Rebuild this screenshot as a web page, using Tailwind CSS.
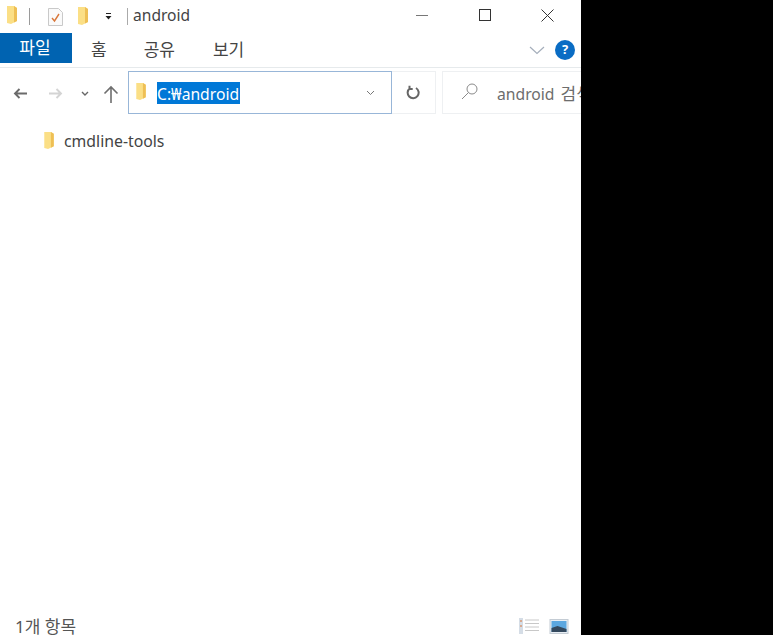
<!DOCTYPE html>
<html lang="ko">
<head>
<meta charset="UTF-8">
<title>android</title>
<script src="https://cdn.jsdelivr.net/npm/@tailwindcss/browser@4"></script>
</head>
<body class="bg-black">
<div class="flex w-[773px] h-[635px] overflow-hidden bg-black font-['Noto_Sans','Noto_Sans_CJK_KR',sans-serif]">
	<div class="w-[581px] h-full bg-white flex flex-col overflow-hidden">

		<!-- title bar -->
		<div class="h-[33px] flex items-center shrink-0 relative">
			<svg class="ml-[6px] w-[13px] h-[20px] -mt-[3px]" viewBox="0 0 13 20"><path d="M1 1h7l3 2v13l-6 3-4-1z" fill="#fbdf86"/><path d="M8 1l3 2v13l-3 1.500z" fill="#eebf55"/></svg>
			<div class="ml-[10px] w-px h-[17px] bg-[#9a9a9a] -mt-[1px]"></div>
			<svg class="ml-[18px] w-[15px] h-[18px]" viewBox="0 0 15 18"><path d="M.5.5h10l4 4v13H.5z" fill="#fafafa" stroke="#c9c9c9"/><path d="M4 10l2.500 3L11 6" fill="none" stroke="#d9773a" stroke-width="1.4"/></svg>
			<svg class="ml-[14px] w-[13px] h-[20px] -mt-[1px]" viewBox="0 0 13 20"><path d="M1 1h7l3 2v13l-6 3-4-1z" fill="#fbdf86"/><path d="M8 1l3 2v13l-3 1.500z" fill="#eebf55"/></svg>
			<svg class="ml-[15px] w-[7px] h-[7px]" viewBox="0 0 7 7"><path d="M1 0h5v1H1zM.5 3h6L3.500 6.500z" fill="#222"/></svg>
			<div class="ml-[15px] w-px h-[17px] bg-[#aaa]"></div>
			<span class="ml-[5px] text-[15.6px] text-[#444] -mt-[2px]">android</span>
			<div class="ml-auto flex items-center -mt-[3px]">
				<div class="w-[12px] h-px bg-[#777] mr-[51px]"></div>
				<div class="w-[12px] h-[12px] border border-[#333] mr-[50px]"></div>
				<svg class="w-[13px] h-[13px] mr-[27px]" viewBox="0 0 13 13"><path d="M.5.5l12 12M12.500.5l-12 12" stroke="#333" fill="none"/></svg>
			</div>
		</div>

		<!-- ribbon tabs -->
		<div class="h-[30px] flex items-center shrink-0 text-[17px] text-[#444]">
			<div class="w-[72px] h-full bg-[#0063b1] text-white flex items-center justify-center pr-[2px]">파일</div>
			<span class="ml-[19px] mt-[4px]">홈</span>
			<span class="ml-[37px] mt-[4px]">공유</span>
			<span class="ml-[38px] mt-[4px]">보기</span>
			<div class="ml-auto flex items-center mt-[4px]">
				<svg class="w-[16px] h-[9px] mr-[10px]" viewBox="0 0 16 9"><path d="M1 1l7 6.500L15 1" fill="none" stroke="#a5aebb" stroke-width="1.2"/></svg>
				<div class="w-[20px] h-[20px] rounded-full bg-[#0a6cc4] text-white text-[13px] font-bold flex items-center justify-center mr-[6px]">?</div>
			</div>
		</div>

		<!-- address row -->
		<div class="mt-[4px] border-t border-[#e6eaec] h-[48px] shrink-0 flex items-start pt-[3px]">
			<svg class="ml-[13px] mt-[16px] w-[15px] h-[13px]" viewBox="0 0 15 13"><path d="M14 6.500H2M6.500 2L2 6.500 6.500 11" fill="none" stroke="#6b6b6b" stroke-width="1.9"/></svg>
			<svg class="ml-[20px] mt-[16px] w-[15px] h-[13px]" viewBox="0 0 15 13"><path d="M1 6.500h12M8.500 2L13 6.500 8.500 11" fill="none" stroke="#d4d4d4" stroke-width="1.9"/></svg>
			<svg class="ml-[18px] mt-[20px] w-[8px] h-[6px]" viewBox="0 0 8 6"><path d="M1 1l3 3 3-3" fill="none" stroke="#666" stroke-width="1.4"/></svg>
			<svg class="ml-[14px] mt-[14px] w-[16px] h-[18px]" viewBox="0 0 16 18"><path d="M8 18V2M1.500 8.500L8 2l6.500 6.500" fill="none" stroke="#6f6f6f" stroke-width="1.6"/></svg>
			<div class="ml-[9px] w-[264px] h-[43px] border border-[#98b6d8] flex items-center">
				<svg class="ml-[6px] w-[13px] h-[19px] -mt-[3px]" viewBox="0 0 13 20"><path d="M1 1h7l3 2v13l-6 3-4-1z" fill="#fbdf86"/><path d="M8 1l3 2v13l-3 1.500z" fill="#eebf55"/></svg>
				<span class="ml-[9px] bg-[#0078d7] text-white text-[15.7px] leading-[20px] pt-[2px] pr-px">C:₩android</span>
				<svg class="ml-auto mr-[16px] w-[9px] h-[6px]" viewBox="0 0 9 6"><path d="M1 1l3.500 3.500L8 1" fill="none" stroke="#777" stroke-width="1"/></svg>
			</div>
			<div class="w-[44px] h-[43px] border border-l-0 border-[#eef0f2] flex items-center justify-center pr-[2px]">
				<svg class="w-[14px] h-[15px]" viewBox="0 0 14 15"><path d="M4 3.200A5.500 5.500 0 1 0 10 3M3.500 .8V4h3.200" fill="none" stroke="#666" stroke-width="2"/></svg>
			</div>
			<div class="ml-[6px] flex-1 h-[43px] border border-r-0 border-[#eef0f2] flex items-center overflow-hidden whitespace-nowrap">
				<svg class="ml-[18px] w-[18px] h-[18px] shrink-0 -mt-[3px]" viewBox="0 0 18 18"><circle cx="11" cy="7" r="5" fill="none" stroke="#8a8a8a"/><path d="M7.500 10.500L1 17" stroke="#8a8a8a" fill="none"/></svg>
				<span class="ml-[18px] mt-[2px] text-[15.7px] text-[#6d6d6d]">android <span class="ml-[2px] text-[17px]">검색</span></span>
			</div>
		</div>

		<!-- file list -->
		<div class="flex-1 pt-[15px] pl-[43px]">
			<div class="flex items-center h-[24px]">
				<svg class="w-[13px] h-[19px] -mt-[3px]" viewBox="0 0 13 20"><path d="M1 1h7l3 2v13l-6 3-4-1z" fill="#fbdf86"/><path d="M8 1l3 2v13l-3 1.500z" fill="#eebf55"/></svg>
				<span class="ml-[8px] text-[15.8px] text-[#444]">cmdline-tools</span>
			</div>
		</div>

		<!-- status bar -->
		<div class="h-[18px] shrink-0 flex items-center">
			<span class="ml-[15px] mt-[1px] text-[17px] leading-[17px] text-[#555]">1개 항목</span>
			<div class="ml-auto flex items-center gap-[10px] mr-[12px]">
				<svg class="w-[20px] h-[16px]" viewBox="0 0 20 16"><rect x="0" y="0" width="4" height="16" fill="#d5dde6"/><path d="M1 3h2M1 8h2" stroke="#d9773a"/><path d="M6 2h14M6 5.500h14M6 9h14M6 12.500h14" stroke="#c8c8c8"/></svg>
				<svg class="w-[20px] h-[15px]" viewBox="0 0 19 15"><rect x=".5" y=".5" width="18" height="14" fill="#e8eef4" stroke="#c4ccd4"/><rect x="2" y="2" width="15" height="11" fill="#5ba7e0"/><path d="M2 9l6-2 9 3v3H2z" fill="#34495e"/></svg>
			</div>
		</div>
	</div>
</div>
</body>
</html>
